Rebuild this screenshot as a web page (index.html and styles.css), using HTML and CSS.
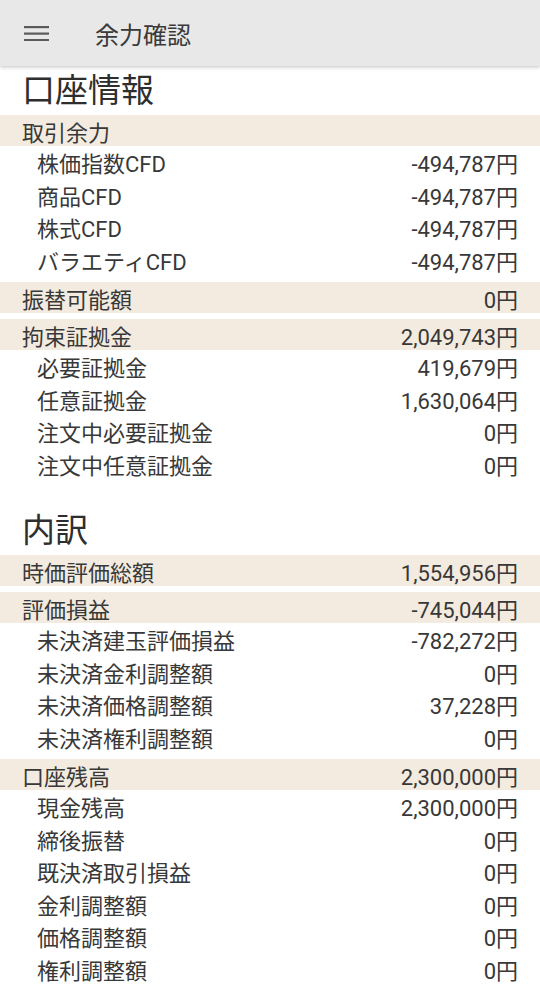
FILE: index.html
```html
<!DOCTYPE html>
<html lang="ja">
  <head>
    <meta charset="utf-8">
    <title>余力確認</title>
    <link rel="stylesheet" href="styles.css">
  </head>
  <body>
    <header class="topbar">
      <span class="menu-btn">
        <svg width="25" height="16" viewBox="0 0 25 16">
          <rect x="0" y="1" width="25" height="2.2" fill="#5a5a5a" />
          <rect x="0" y="7.5" width="25" height="2.2" fill="#5a5a5a" />
          <rect x="0" y="14" width="25" height="2.2" fill="#5a5a5a" />
        </svg>
      </span>
      <h1 class="topbar-title">余力確認</h1>
    </header>

    <section class="section">
      <h2 class="section-title">口座情報</h2>

      <div class="group">
        <div class="band"><span>取引余力</span><span></span></div>
        <div class="row"><span>株価指数CFD</span><span>-494,787円</span></div>
        <div class="row"><span>商品CFD</span><span>-494,787円</span></div>
        <div class="row"><span>株式CFD</span><span>-494,787円</span></div>
        <div class="row"><span>バラエティCFD</span><span>-494,787円</span></div>
      </div>

      <div class="group">
        <div class="band"><span>振替可能額</span><span>0円</span></div>
      </div>

      <div class="group">
        <div class="band"><span>拘束証拠金</span><span>2,049,743円</span></div>
        <div class="row"><span>必要証拠金</span><span>419,679円</span></div>
        <div class="row"><span>任意証拠金</span><span>1,630,064円</span></div>
        <div class="row"><span>注文中必要証拠金</span><span>0円</span></div>
        <div class="row"><span>注文中任意証拠金</span><span>0円</span></div>
      </div>
    </section>

    <section class="section section-next">
      <h2 class="section-title">内訳</h2>

      <div class="group">
        <div class="band"><span>時価評価総額</span><span>1,554,956円</span></div>
      </div>

      <div class="group">
        <div class="band"><span>評価損益</span><span>-745,044円</span></div>
        <div class="row"><span>未決済建玉評価損益</span><span>-782,272円</span></div>
        <div class="row"><span>未決済金利調整額</span><span>0円</span></div>
        <div class="row"><span>未決済価格調整額</span><span>37,228円</span></div>
        <div class="row"><span>未決済権利調整額</span><span>0円</span></div>
      </div>

      <div class="group">
        <div class="band"><span>口座残高</span><span>2,300,000円</span></div>
        <div class="row"><span>現金残高</span><span>2,300,000円</span></div>
        <div class="row"><span>締後振替</span><span>0円</span></div>
        <div class="row"><span>既決済取引損益</span><span>0円</span></div>
        <div class="row"><span>金利調整額</span><span>0円</span></div>
        <div class="row"><span>価格調整額</span><span>0円</span></div>
        <div class="row"><span>権利調整額</span><span>0円</span></div>
      </div>
    </section>
  </body>
</html>
```

FILE: styles.css
```css
body {
  margin: 0;
  font-family: Roboto, "Noto Sans CJK JP", sans-serif;
  color: #383838;
  background: #fff;
}

.topbar {
  height: 66px;
  background: #e8e8e8;
  display: flex;
  align-items: center;
  box-shadow: 0 1px 4px rgba(0, 0, 0, 0.25);
  position: relative;
}

.menu-btn {
  display: flex;
  margin-left: 24px;
  width: 25px;
}

.topbar-title {
  margin: 0 0 0 46px;
  font-size: 24px;
  font-weight: 400;
  color: #3a3a3a;
}

.section-title {
  margin: 0;
  height: 49px;
  line-height: 50px;
  padding-left: 22px;
  font-size: 33px;
  font-weight: 400;
  color: #2e2e2e;
}

.section-next {
  margin-top: 26px;
}

.group + .group {
  margin-top: 6px;
}

.band,
.row {
  display: flex;
  justify-content: space-between;
  align-items: center;
  font-size: 22px;
  padding-right: 22px;
}

.band {
  height: 31px;
  background: #f3ebdf;
  padding-left: 22px;
}

.row {
  height: 32.5px;
  padding-left: 37px;
}
```
